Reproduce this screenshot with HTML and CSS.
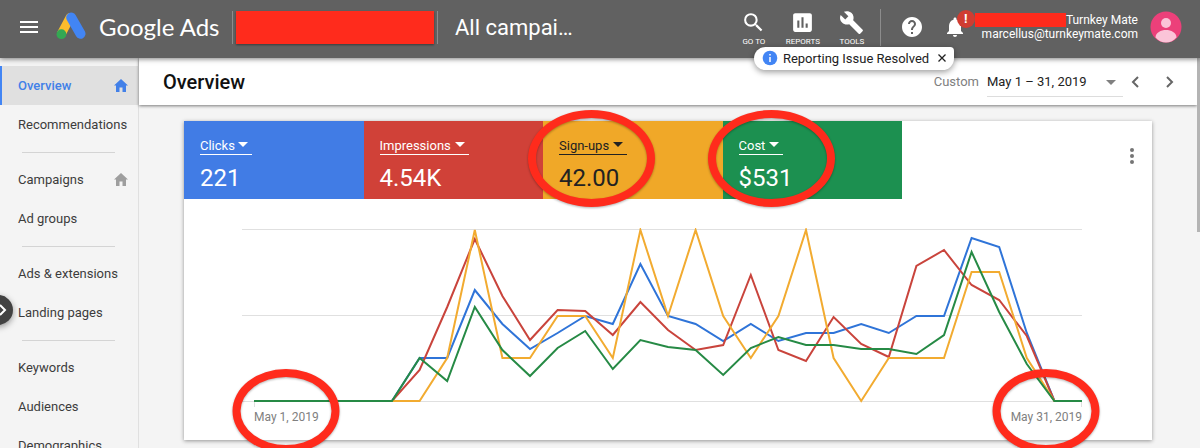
FILE: index.html
```
<!DOCTYPE html>
<html lang="en">
<head>
    <meta charset="UTF-8">
    <meta name="viewport" content="width=device-width, initial-scale=1.0">
    <title>Overview - Google Ads</title>
    <link rel="stylesheet" href="styles.css">
</head>
<body>
    <header class="topbar">
        <button class="menu-btn" aria-label="Main menu">
            <svg width="18" height="12" viewBox="0 0 18 12"><path d="M0 1h18M0 6h18M0 11h18" stroke="#fff" stroke-width="2"/></svg>
        </button>
        <a class="brand" href="#">
            <svg width="30" height="28" viewBox="0 0 30 28">
                <path d="M14 5.500 5.500 21.500" stroke="#fbbc2c" stroke-width="9" stroke-linecap="round"/>
                <path d="M15.200 5.500 24.500 21.800" stroke="#4285f4" stroke-width="10" stroke-linecap="round"/>
                <circle cx="5.400" cy="22.200" r="4.900" fill="#34a853"/>
            </svg>
            <span class="brand-name">Google Ads</span>
        </a>
        <div class="account-block"><span class="redacted"></span></div>
        <div class="scope">All campai…</div>

        <div class="tools">
            <button class="tool">
                <svg width="25" height="25" viewBox="0 0 24 24"><path fill="#fff" d="M15.500 14h-.79l-.28-.27A6.471 6.471 0 0 0 16 9.500 6.500 6.500 0 1 0 9.500 16c1.610 0 3.090-.59 4.230-1.570l.27.28v.79l5 4.990L20.490 19l-4.990-5zm-6 0C7.010 14 5 11.990 5 9.500S7.010 5 9.500 5 14 7.010 14 9.500 11.990 14 9.500 14z"/></svg>
                GO TO
            </button>
            <button class="tool">
                <svg width="25" height="25" viewBox="0 0 24 24"><path fill="#fff" d="M19 3H5c-1.100 0-2 .9-2 2v14c0 1.100.9 2 2 2h14c1.100 0 2-.9 2-2V5c0-1.100-.9-2-2-2zM9 17H7v-7h2v7zm4 0h-2V7h2v10zm4 0h-2v-4h2v4z"/></svg>
                REPORTS
            </button>
            <button class="tool">
                <svg width="25" height="25" viewBox="0 0 24 24"><path fill="#fff" d="M22.700 19l-9.100-9.100c.9-2.300.4-5-1.500-6.900-2-2-5-2.400-7.400-1.300L9 6 6 9 1.600 4.700C.4 7.100.9 10.100 2.900 12.100c1.900 1.900 4.600 2.400 6.900 1.500l9.100 9.100c.4.400 1 .4 1.400 0l2.300-2.300c.5-.4.5-1.100.1-1.400z"/></svg>
                TOOLS
            </button>
            <div class="toast" role="status">
                <svg width="16" height="16" viewBox="0 0 16 16"><circle cx="8" cy="8" r="7.300" fill="#4285f4"/><path d="M8 7v5M8 4v1.600" stroke="#fff" stroke-width="1.500"/></svg>
                <span>Reporting Issue Resolved</span>
                <button class="toast-close" aria-label="Dismiss">
                    <svg width="8" height="8" viewBox="0 0 8 8"><path d="M.5.5l7 7M7.500.5l-7 7" stroke="#222" stroke-width="1.300"/></svg>
                </button>
            </div>
        </div>

        <div class="user-area">
            <button class="icon-btn" aria-label="Help">
                <svg width="24" height="24" viewBox="0 0 24 24"><path fill="#fff" d="M12 2C6.480 2 2 6.480 2 12s4.480 10 10 10 10-4.480 10-10S17.520 2 12 2zm1 17h-2v-2h2v2zm2.070-7.750-.9.920C13.450 12.900 13 13.500 13 15h-2v-.5c0-1.100.45-2.100 1.170-2.830l1.240-1.260c.37-.36.59-.86.59-1.410 0-1.100-.9-2-2-2s-2 .9-2 2H8c0-2.210 1.790-4 4-4s4 1.790 4 4c0 .88-.36 1.680-.93 2.250z"/></svg>
            </button>
            <button class="icon-btn bell" aria-label="Notifications">
                <svg width="24" height="24" viewBox="0 0 24 24"><path fill="#fff" d="M12 22c1.100 0 2-.9 2-2h-4c0 1.100.89 2 2 2zm6-6v-5c0-3.070-1.640-5.640-4.500-6.320V4c0-.83-.67-1.500-1.500-1.500s-1.500.67-1.500 1.500v.68C7.630 5.360 6 7.920 6 11v5l-2 2v1h16v-1l-2-2z"/></svg>
                <span class="badge">!</span>
            </button>
            <div class="user">
                <div class="user-line"><span class="redacted-name"></span>Turnkey Mate</div>
                <div class="user-line">marcellus@turnkeymate.com</div>
            </div>
            <button class="avatar" aria-label="Account">
                <svg width="32" height="32" viewBox="0 0 32 32">
                    <circle cx="16" cy="16" r="15.500" fill="#ec407a"/>
                    <circle cx="16" cy="12" r="5" fill="#fbc4d8"/>
                    <path d="M5.500 26.500C5.500 21.500 11 19 16 19s10.500 2.500 10.500 7.500C24 29.500 20 31.500 16 31.500S8 29.500 5.500 26.500z" fill="#fbc4d8"/>
                </svg>
            </button>
        </div>
    </header>

    <div class="layout">
        <nav class="sidebar">
            <a class="nav-item active" href="#">Overview
                <svg width="14" height="13" viewBox="0 0 14 13"><path fill="currentColor" d="M7 0l7 6.600h-2V13H8.500V8.500h-3V13H2V6.600H0z"/></svg>
            </a>
            <a class="nav-item" href="#">Recommendations</a>
            <hr class="nav-divider">
            <a class="nav-item" href="#">Campaigns
                <svg class="home-muted" width="14" height="13" viewBox="0 0 14 13"><path fill="currentColor" d="M7 0l7 6.600h-2V13H8.500V8.500h-3V13H2V6.600H0z"/></svg>
            </a>
            <a class="nav-item" href="#">Ad groups</a>
            <hr class="nav-divider">
            <a class="nav-item" href="#">Ads &amp; extensions</a>
            <a class="nav-item" href="#">Landing pages</a>
            <hr class="nav-divider">
            <a class="nav-item" href="#">Keywords</a>
            <a class="nav-item" href="#">Audiences</a>
            <a class="nav-item" href="#">Demographics</a>
            <button class="expander" aria-label="Expand navigation">
                <svg width="8" height="12" viewBox="0 0 8 12"><path d="M1 1l5 5-5 5" fill="none" stroke="#fff" stroke-width="2"/></svg>
            </button>
        </nav>

        <main class="content">
            <div class="page-head">
                <h1>Overview</h1>
                <div class="date-picker">
                    <label for="dateRange">Custom</label>
                    <span class="date-select">
                        <select id="dateRange">
                            <option>May 1 – 31, 2019</option>
                        </select>
                    </span>
                    <button class="step" aria-label="Previous period">
                        <svg width="8" height="12" viewBox="0 0 8 12"><path d="M7 1L2 6l5 5" fill="none" stroke="#666" stroke-width="2"/></svg>
                    </button>
                    <button class="step" aria-label="Next period">
                        <svg width="8" height="12" viewBox="0 0 8 12"><path d="M1 1l5 5-5 5" fill="none" stroke="#666" stroke-width="2"/></svg>
                    </button>
                </div>
            </div>

            <section class="card">
                <div class="card-top">
                    <div class="metrics">
                        <div class="metric blue">
                            <span class="metric-name"><select aria-label="Metric 1"><option>Clicks</option></select></span>
                            <div class="metric-value">221</div>
                        </div>
                        <div class="metric red">
                            <span class="metric-name"><select aria-label="Metric 2"><option>Impressions</option></select></span>
                            <div class="metric-value">4.54K</div>
                        </div>
                        <div class="metric yellow">
                            <span class="metric-name"><select aria-label="Metric 3"><option>Sign-ups</option></select></span>
                            <div class="metric-value">42.00</div>
                            <span class="ring ring-metric"></span>
                        </div>
                        <div class="metric green">
                            <span class="metric-name"><select aria-label="Metric 4"><option>Cost</option></select></span>
                            <div class="metric-value">$531</div>
                            <span class="ring ring-metric"></span>
                        </div>
                    </div>
                    <button class="kebab" aria-label="More options">
                        <svg width="6" height="16" viewBox="0 0 6 16" fill="#757575"><circle cx="3" cy="2" r="2"/><circle cx="3" cy="8" r="2"/><circle cx="3" cy="14" r="2"/></svg>
                    </button>
                </div>

                <div class="chart">
                    <svg class="plot" viewBox="0 0 840 180" role="img" aria-label="Daily clicks, impressions, sign-ups and cost">
                        <path d="M0 1.500h840M0 87.500h840M0 173.500h840M12.500 173v6M839.500 173v6" stroke="#e0e0e0"/>
                        <g class="series" id="series"></g>
                    </svg>
                    <div class="axis">
                        <span class="tick">May 1, 2019<span class="ring ring-date"></span></span>
                        <span class="tick">May 31, 2019<span class="ring ring-date"></span></span>
                    </div>
                </div>
            </section>
            <div class="scroll-thumb"></div>
        </main>
    </div>

    <script src="chart.js"></script>
</body>
</html>
```
FILE: styles.css
```
* {
    box-sizing: border-box;
}

body {
    margin: 0;
    height: 100vh;
    display: flex;
    flex-direction: column;
    overflow: hidden;
    font-family: Roboto, "Liberation Sans", sans-serif;
    font-size: 13px;
    color: #3c3c3c;
    background: #f4f4f4;
}

button,
select {
    font: inherit;
    color: inherit;
    background: none;
    border: 0;
    padding: 0;
    margin: 0;
    cursor: pointer;
}

select {
    appearance: none;
}

a {
    color: inherit;
    text-decoration: none;
}

svg {
    display: block;
    flex: none;
}

/* top bar */
.topbar {
    position: relative;
    z-index: 3;
    display: flex;
    align-items: center;
    flex: none;
    height: 58px;
    padding: 0 18px 4px 20px;
    color: #fff;
    background: #616161;
    box-shadow: 0 1px 5px rgba(0, 0, 0, 0.5);
}

.brand {
    display: flex;
    align-items: center;
    margin-left: 18px;
    padding-bottom: 2px;
}

.brand-name {
    width: 133px;
    margin-left: 13px;
    font-family: Lato, sans-serif;
    font-size: 24px;
    white-space: nowrap;
}

.account-block {
    padding: 0 3px;
    border: solid #8c8c8c;
    border-width: 0 1px;
}

.redacted {
    display: block;
    width: 198px;
    height: 33px;
    background: #ff2b1c;
    box-shadow: 0 1px 2px rgba(0, 0, 0, 0.4);
}

.scope {
    margin-left: 17px;
    font-size: 22px;
    white-space: nowrap;
}

.tools {
    position: relative;
    display: flex;
    gap: 1px;
    margin-left: auto;
    padding-right: 4px;
    border-right: 1px solid #8c8c8c;
}

.tool {
    display: flex;
    flex-direction: column;
    align-items: center;
    width: 48px;
    padding-top: 1px;
    font-size: 8px;
    line-height: 8px;
    gap: 3px;
}

.toast {
    position: absolute;
    top: 38px;
    left: 24px;
    display: flex;
    align-items: center;
    gap: 5px;
    height: 23px;
    padding: 0 8px;
    border-radius: 12px 4px 12px 12px;
    color: #222;
    background: #fff;
    box-shadow: 0 2px 6px rgba(0, 0, 0, 0.4);
    white-space: nowrap;
}

.toast-close {
    margin-left: 4px;
}

.user-area {
    display: flex;
    align-items: center;
    margin-left: 19px;
}

.icon-btn {
    position: relative;
}

.bell {
    margin-left: 19px;
}

.badge {
    position: absolute;
    top: -5px;
    left: 14px;
    width: 18px;
    height: 18px;
    border-radius: 50%;
    font-size: 13px;
    font-weight: 700;
    line-height: 18px;
    text-align: center;
    background: #d03c31;
}

.user {
    margin-left: 8px;
    font-size: 12px;
    line-height: 14px;
    text-align: right;
}

.user-line {
    display: flex;
    justify-content: flex-end;
}

.redacted-name {
    width: 91px;
    background: #ff2b1c;
}

.avatar {
    margin-left: 12px;
}

/* side navigation */
.layout {
    display: flex;
    flex: 1;
    min-height: 0;
}

.sidebar {
    position: relative;
    flex: none;
    width: 139px;
    padding-top: 8px;
    border-right: 1px solid #e0e0e0;
}

.nav-item {
    display: flex;
    align-items: center;
    justify-content: space-between;
    height: 39px;
    padding: 0 10px 0 18px;
    white-space: nowrap;
}

.nav-item.active {
    padding-left: 16px;
    border-left: 2px solid #4285f4;
    font-weight: 500;
    color: #4280e8;
    background: #e0e0e0;
}

.home-muted {
    color: #9e9e9e;
}

.nav-divider {
    height: 1px;
    margin: 8px 23px 7px 22px;
    border: 0;
    background: #d4d4d4;
}

.expander {
    position: absolute;
    top: 237px;
    left: -17px;
    display: flex;
    align-items: center;
    justify-content: flex-end;
    width: 30px;
    height: 30px;
    padding-right: 6px;
    border-radius: 50%;
    background: #424242;
    box-shadow: 0 2px 6px rgba(0, 0, 0, 0.4);
}

/* content */
.content {
    position: relative;
    flex: 1;
    min-width: 0;
    padding-right: 3px;
}

.page-head {
    display: flex;
    align-items: center;
    justify-content: space-between;
    height: 47px;
    padding: 0 23px 0 24px;
    background: #fff;
    box-shadow: 0 1px 3px rgba(0, 0, 0, 0.5);
}

.page-head h1 {
    margin: 0;
    font-size: 20px;
    font-weight: 500;
    color: #111;
}

.date-picker {
    display: flex;
    align-items: center;
    color: #808080;
}

.date-select {
    position: relative;
    margin: 0 8px;
}

.date-select select {
    width: 136px;
    height: 30px;
    border-bottom: 1px solid #ddd;
    color: #222;
}

.date-select::after,
.metric-name::after {
    content: "";
    position: absolute;
    top: 6px;
    right: 4px;
    border: 5px solid transparent;
    border-top-color: currentColor;
    border-bottom: 0;
    pointer-events: none;
}

.date-select::after {
    top: 13px;
    right: 7px;
}

.step + .step {
    margin-left: 27px;
}

.card {
    margin: 16px 45px 0;
    background: #fff;
    box-shadow: 0 1px 4px rgba(0, 0, 0, 0.4);
}

.card-top {
    display: flex;
    align-items: center;
    justify-content: space-between;
    padding-right: 17px;
}

.metrics {
    display: grid;
    grid-template-columns: repeat(4, 1fr);
    flex: 1;
    max-width: 718px;
}

.metric {
    position: relative;
    display: flex;
    flex-direction: column;
    align-items: flex-start;
    height: 78px;
    padding: 15px 16px;
    color: #fff;
}

.blue {
    background: #417ce5;
}

.red {
    background: #d04138;
}

.yellow {
    color: #222;
    background: #f0a828;
}

.green {
    background: #1c9050;
}

.metric-name {
    position: relative;
    border-bottom: 1px solid;
}

.metric-name select {
    display: block;
    height: 18px;
    padding-right: 17px;
}

.metric-value {
    margin-top: 9px;
    font-size: 24px;
    line-height: 28px;
}

.kebab {
    padding-bottom: 8px;
}

.chart {
    padding: 29px 70px 15px 58px;
}

.plot {
    width: 100%;
}

.series {
    fill: none;
    stroke-width: 2;
}

.axis {
    display: flex;
    justify-content: space-between;
    padding: 1px 0 0 12px;
    font-size: 12px;
    line-height: 16px;
    color: #808080;
}

.tick {
    position: relative;
}

/* hand-marked highlights */
.ring {
    position: absolute;
    z-index: 2;
    border: 8px solid #ff2b1c;
    border-radius: 50%;
    filter: drop-shadow(0 1px 1px rgba(0, 0, 0, 0.3));
    pointer-events: none;
}

.ring-metric {
    top: -11px;
    left: -15px;
    width: 127px;
    height: 97px;
}

.ring-date {
    top: -40px;
    left: 50%;
    width: 107px;
    height: 84px;
    transform: translateX(-50%);
}

.scroll-thumb {
    position: absolute;
    top: 0;
    right: 0;
    width: 3px;
    height: 174px;
    background: #b4b4b4;
}
```
FILE: chart.js
```
// one value per day of May, measured down from the top of the plot
const series = [
    { color: '#2f74d8', y: [130, 130, 62, 96, 121, 105, 88, 96, 36, 88, 96, 113, 96, 113, 105, 105, 96, 105, 88, 88, 10, 19, 105, 173, 173] },
    { color: '#c9443c', y: [142, 79, 11, 68, 112, 82, 83, 107, 74, 102, 122, 117, 47, 122, 133, 89, 116, 129, 38, 22, 57, 72, 108, 173, 173] },
    { color: '#f2ab30', y: [173, 130, 2, 130, 130, 88, 88, 130, 2, 88, 2, 88, 130, 88, 2, 130, 173, 130, 130, 130, 44, 44, 130, 173, 173] },
    { color: '#268a45', y: [130, 153, 79, 122, 148, 120, 103, 141, 112, 119, 122, 147, 120, 109, 117, 117, 121, 121, 126, 107, 24, 84, 136, 173, 173] }
];

const group = document.getElementById('series');
const step = (840 - 12) / 30;

series.forEach(({ color, y }) => {
    // nothing was recorded on the first six days
    const days = Array(6).fill(173).concat(y);
    const line = document.createElementNS('http://www.w3.org/2000/svg', 'polyline');
    line.setAttribute('points', days.map((v, i) => `${12 + i * step},${v}`).join(' '));
    line.setAttribute('stroke', color);
    group.appendChild(line);
});
```
